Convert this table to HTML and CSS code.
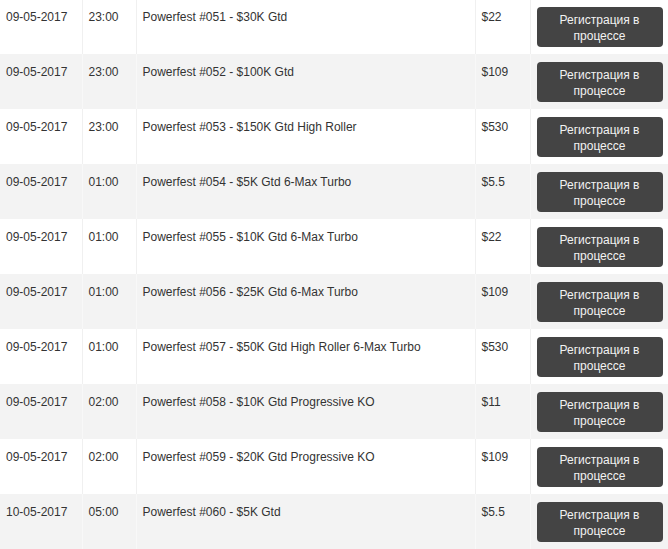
FILE: index.html
```
<!DOCTYPE html>
<html>
<head>
<meta charset="utf-8">
<link rel="stylesheet" href="styles.css">
</head>
<body>
<table class="schedule">
<colgroup><col class="c-date"><col class="c-time"><col class="c-name"><col class="c-buy"><col class="c-act"></colgroup>
<tbody>
<tr><td>09-05-2017</td><td>23:00</td><td>Powerfest #051 - $30K Gtd</td><td>$22</td><td class="act"><span class="btn">Регистрация в процессе</span></td></tr>
<tr><td>09-05-2017</td><td>23:00</td><td>Powerfest #052 - $100K Gtd</td><td>$109</td><td class="act"><span class="btn">Регистрация в процессе</span></td></tr>
<tr><td>09-05-2017</td><td>23:00</td><td>Powerfest #053 - $150K Gtd High Roller</td><td>$530</td><td class="act"><span class="btn">Регистрация в процессе</span></td></tr>
<tr><td>09-05-2017</td><td>01:00</td><td>Powerfest #054 - $5K Gtd 6-Max Turbo</td><td>$5.5</td><td class="act"><span class="btn">Регистрация в процессе</span></td></tr>
<tr><td>09-05-2017</td><td>01:00</td><td>Powerfest #055 - $10K Gtd 6-Max Turbo</td><td>$22</td><td class="act"><span class="btn">Регистрация в процессе</span></td></tr>
<tr><td>09-05-2017</td><td>01:00</td><td>Powerfest #056 - $25K Gtd 6-Max Turbo</td><td>$109</td><td class="act"><span class="btn">Регистрация в процессе</span></td></tr>
<tr><td>09-05-2017</td><td>01:00</td><td>Powerfest #057 - $50K Gtd High Roller 6-Max Turbo</td><td>$530</td><td class="act"><span class="btn">Регистрация в процессе</span></td></tr>
<tr><td>09-05-2017</td><td>02:00</td><td>Powerfest #058 - $10K Gtd Progressive KO</td><td>$11</td><td class="act"><span class="btn">Регистрация в процессе</span></td></tr>
<tr><td>09-05-2017</td><td>02:00</td><td>Powerfest #059 - $20K Gtd Progressive KO</td><td>$109</td><td class="act"><span class="btn">Регистрация в процессе</span></td></tr>
<tr><td>10-05-2017</td><td>05:00</td><td>Powerfest #060 - $5K Gtd</td><td>$5.5</td><td class="act"><span class="btn">Регистрация в процессе</span></td></tr>
</tbody>
</table>
</body>
</html>
```
FILE: styles.css
```
html, body {
  margin: 0;
  padding: 0;
  background: #fff;
}
body {
  font-family: "Liberation Sans", Arial, sans-serif;
  font-size: 12px;
  color: #333;
}
.schedule {
  width: 668px;
  margin-top: -1px;
  border-collapse: collapse;
  table-layout: fixed;
}
.c-date { width: 82px; }
.c-time { width: 54px; }
.c-name { width: 339px; }
.c-buy { width: 55px; }
.c-act { width: 138px; }
.schedule td {
  height: 55px;
  box-sizing: border-box;
  padding: 10px 6px 0 6px;
  vertical-align: top;
  line-height: 16px;
  border-left: 1px solid #f0f0f0;
  white-space: nowrap;
}
.schedule td:first-child {
  border-left: none;
}
.schedule tr:nth-child(even) td {
  background: #f3f3f3;
  border-left-color: #f8f8f8;
}
.schedule td.act {
  padding: 8px 6px 0 6px;
}
.btn {
  display: block;
  box-sizing: border-box;
  width: 126px;
  height: 40px;
  padding: 5px 10px 0;
  background: #444;
  color: #f2f2f2;
  border-radius: 4px;
  text-align: center;
  white-space: normal;
  line-height: 16px;
  font-size: 12px;
}
```
